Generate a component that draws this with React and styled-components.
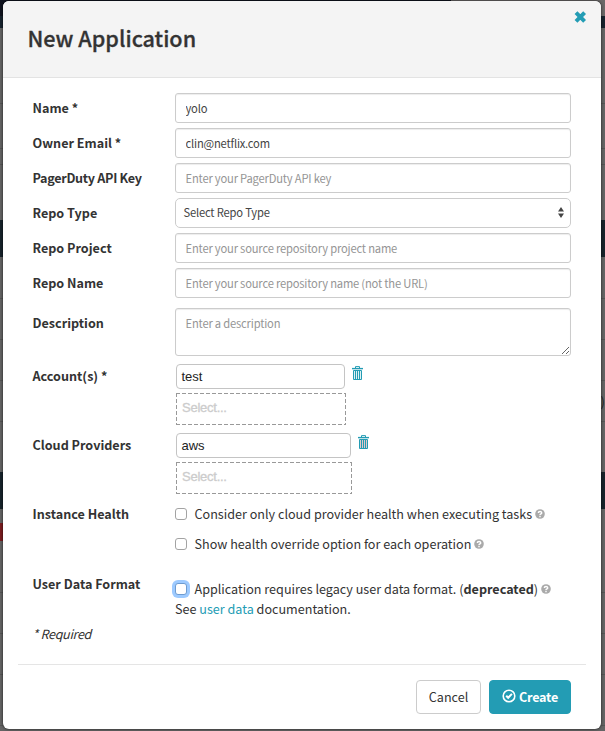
import React from "react";
import styled, { createGlobalStyle, css } from "styled-components";

const font = '"Noto Sans CJK SC", "Noto Sans", sans-serif';
const teal = "#239cb4";

const Global = createGlobalStyle`
  *, *::before, *::after { box-sizing: border-box; }
  html, body { margin: 0; padding: 0; }
  body { width: 605px; height: 731px; overflow: hidden; background: #626262; font-family: ${font}; color: #333; }
`;

const Page = styled.div`
  position: relative;
  width: 605px;
  height: 731px;
  overflow: hidden;
  padding: 1px 4px 0 3px;
  background: #5f5f5f;
`;

const Backdrop = styled.div`
  position: absolute;
  inset: 0;
  display: flex;
  flex-direction: column;
`;

const Strip = styled.div`
  flex: none;
  height: ${(p) => p.$h}px;
  background: ${(p) => p.$bg || "#646464"};
  border-top: ${(p) => (p.$line ? "1px solid #555" : "0")};
  display: flex;
  justify-content: ${(p) => (p.$end ? "flex-end" : "flex-start")};
  align-items: center;
  font-size: 13px;
  line-height: 1;
  color: #222;
  overflow: hidden;
`;

const RedTag = styled.div`
  width: 300px;
  height: 100%;
  background: #7b1c20;
`;

const TopBar = styled.div`
  position: absolute;
  left: 451px;
  top: 0;
  width: 154px;
  height: 16px;
  background: #6a6868;
`;

const Modal = styled.div`
  position: relative;
  height: 728px;
  background: #fff;
  border-radius: 6px;
  box-shadow: 0 0 3px rgba(0, 0, 0, 0.75);
  overflow: hidden;
  display: flex;
  flex-direction: column;
`;

const Header = styled.header`
  height: 77px;
  flex: none;
  background: #f4f4f4;
  border-bottom: 1px solid #e3e3e3;
  padding: 20px 14px 0 24.5px;
  display: flex;
  justify-content: space-between;
`;

const Title = styled.h3`
  margin: 0;
  font-size: 21.6px;
  line-height: 33px;
  font-weight: 500;
  -webkit-text-stroke: 0.3px #333;
  white-space: nowrap;
`;

const Close = styled.button`
  border: 0;
  padding: 0;
  background: none;
  width: 13px;
  height: 12px;
  margin-top: -10px;
  svg { display: block; }
`;

const Form = styled.form`
  margin: 0;
  height: 586px;
  flex: none;
  padding: 15px 30px 0 29.5px;
`;

const Row = styled.div`
  display: grid;
  grid-template-columns: 142.5px 1fr;
  height: ${(p) => p.$h}px;
`;

const Spacer = styled.div`
  height: ${(p) => p.$h}px;
`;

const Label = styled.label`
  font-size: 12.6px;
  font-weight: 700;
  line-height: 20px;
  padding-top: ${(p) => p.$pt ?? 5}px;
  letter-spacing: ${(p) => p.$track || 0}px;
  white-space: nowrap;
`;

const control = css`
  width: 396px;
  border: 1px solid #ccc;
  border-radius: 3px;
  background: #fff;
  box-shadow: inset 0 1px 1px rgba(0, 0, 0, 0.075);
  font-family: ${font};
  font-size: 11.2px;
  letter-spacing: -0.19px;
  color: #444;
  outline: none;
  &::placeholder { color: #959595; opacity: 1; }
`;

const Input = styled.input`
  ${control}
  height: 30px;
  padding: 0 9.5px 1px;
`;

const SelectBox = styled.div`
  ${control}
  height: 30px;
  border-radius: 5px;
  box-shadow: none;
  padding: 0 6px 1px 7.5px;
  display: flex;
  align-items: center;
  justify-content: space-between;
  line-height: 27px;
`;

const Textarea = styled.textarea`
  ${control}
  display: block;
  height: 48px;
  padding: 4.5px 9.5px;
  line-height: 18px;
  resize: vertical;
`;

const Stack = styled.div`
  display: flex;
  flex-direction: column;
  align-items: flex-start;
  padding-left: 1px;
`;

const Picked = styled.div`
  display: flex;
  gap: 7.4px;
  height: 25px;
  margin-bottom: 4px;
`;

const PickedValue = styled.div`
  width: ${(p) => p.$w}px;
  height: 25px;
  border: 1px solid #c4c4c4;
  border-radius: 4px;
  padding-left: 4.5px;
  font: 13px/23px "Liberation Sans", Arial, sans-serif;
  color: #222;
`;

const Trash = styled.button`
  border: 0;
  padding: 2px 0 0;
  background: none;
  width: 11px;
  height: 16px;
  svg { display: block; }
`;

const dashX = "repeating-linear-gradient(90deg, #999 0 4px, transparent 4px 6px)";
const dashY = "repeating-linear-gradient(180deg, #999 0 4px, transparent 4px 6px)";

const Dashed = styled.div`
  width: ${(p) => p.$w}px;
  height: 32px;
  padding-left: 6px;
  background:
    ${dashX} 0 0 / 100% 1px no-repeat,
    ${dashX} 0 100% / 100% 1px no-repeat,
    ${dashY} 0 0 / 1px 100% no-repeat,
    ${dashY} 100% 0 / 1px 100% no-repeat;
  font: 13px/30px "Liberation Sans", Arial, sans-serif;
  letter-spacing: -0.25px;
  color: #ccc;
  -webkit-text-stroke: 0.3px #ccc;
`;

const CheckLine = styled.div`
  display: flex;
  align-items: center;
  height: 20px;
  font-size: 12.6px;
  line-height: 20px;
  white-space: nowrap;
  margin-bottom: ${(p) => p.$mb || 0}px;
`;

const Box = styled.input`
  appearance: none;
  flex: none;
  margin: 0 7.5px 0 0;
  width: 12px;
  height: 12px;
  border: 1px solid ${(p) => (p.$focus ? "#6d9bd0" : "#a3a3a3")};
  border-radius: 3px;
  background: #fff;
  box-shadow: ${(p) => (p.$focus ? "0 0 0 3px #9dcaff" : "none")};
`;

const Help = styled.span`
  display: flex;
  flex: none;
  margin-left: 3px;
`;

const Link = styled.a`
  color: ${teal};
  text-decoration: none;
`;

const DocLine = styled.div`
  font-size: 12.6px;
  line-height: 20px;
`;

const Required = styled.em`
  display: block;
  font-size: 12.6px;
  line-height: 20px;
  letter-spacing: -0.35px;
`;

const Footer = styled.footer`
  margin: 0 15px;
  flex: 1;
  border-top: 1px solid #e5e5e5;
  padding: 15px 15px 0 0;
  display: flex;
  justify-content: flex-end;
  gap: 8px;
`;

const Button = styled.button`
  width: ${(p) => (p.$primary ? 82 : 65)}px;
  height: 34px;
  display: flex;
  align-items: center;
  justify-content: center;
  gap: 3px;
  padding: 0;
  border: 1px solid ${(p) => (p.$primary ? teal : "#ccc")};
  border-radius: 4px;
  background: ${(p) => (p.$primary ? teal : "#fff")};
  color: ${(p) => (p.$primary ? "#fff" : "#333")};
  font-family: ${font};
  font-size: 12.6px;
  font-weight: ${(p) => (p.$primary ? 700 : 400)};
  letter-spacing: ${(p) => (p.$primary ? -0.2 : 0)}px;
  line-height: 20px;
  svg { margin-top: -2px; }
`;

const TrashIcon = ({ fill }) => (
  <svg width="11" height="14" viewBox="0 0 11 14" fill="none" stroke={teal}>
    <path d="M1.5 4.5h8v9h-8z" fill={fill} />
    <path d="M3.5 2V.6h4V2M3.5 4v9M5.5 4v9M7.5 4v9" />
    <path d="M0 2.6h11" strokeWidth="1.4" />
  </svg>
);

const HelpIcon = () => (
  <Help>
    <svg width="10" height="10" viewBox="0 0 10 10">
      <circle cx="5" cy="5" r="4.8" fill="#aaa" />
      <path d="M3.3 4C3.4 2.1 6.7 2.1 6.7 3.9 6.7 5 5 4.9 5 6.1M5 6.8v1.4" fill="none" stroke="#fff" strokeWidth="1.4" />
    </svg>
  </Help>
);

const strips = [
  { h: 16, bg: "#10131f" },
  { h: 12, bg: "#17232e" },
  { h: 75 },
  { h: 45, line: 1 },
  { h: 16, line: 1 },
  { h: 56, line: 1 },
  { h: 37, bg: "#17232b" },
  { h: 41 },
  { h: 41, line: 1 },
  { h: 41, line: 1 },
  { h: 41, line: 1, right: ")" },
  { h: 51, line: 1 },
  { h: 37, bg: "#17232b" },
  { h: 14 },
  { h: 18, tag: true },
  { h: 51 },
  { h: 41, line: 1 },
  { h: 41, line: 1 },
  { h: 51, line: 1 },
  { h: 10, line: 1 },
];

const fields = [
  { label: "Name *", value: "yolo" },
  { label: "Owner Email *", value: "clin@netflix.com" },
  { label: "PagerDuty API Key", track: -0.3, placeholder: "Enter your PagerDuty API key" },
  { label: "Repo Type", select: true },
  { label: "Repo Project", placeholder: "Enter your source repository project name" },
  { label: "Repo Name", placeholder: "Enter your source repository name (not the URL)" },
];

const pickers = [
  { label: "Account(s) *", value: "test", w: 169, dw: 170, fill: "#dff1f3" },
  { label: "Cloud Providers", value: "aws", w: 175, dw: 176, fill: "#e3c9c9" },
];

export default function App() {
  return (
    <Page>
      <Global />
      <Backdrop aria-hidden="true">
        {strips.map((s, i) => (
          <Strip key={i} $h={s.h} $bg={s.bg} $line={s.line} $end={!!s.right}>
            {s.tag ? <RedTag /> : s.right}
          </Strip>
        ))}
        <TopBar />
      </Backdrop>
      <Modal>
        <Header>
          <Title>New Application</Title>
          <Close aria-label="Close">
            <svg width="13" height="12" viewBox="0 0 13 12">
              <path d="M2 1.7l8.6 8.6M10.6 1.7L2 10.3" stroke={teal} strokeWidth="4" />
            </svg>
          </Close>
        </Header>
        <Form>
          {fields.map((f) => (
            <Row key={f.label} $h={35}>
              <Label $track={f.track}>{f.label}</Label>
              {f.select ? (
                <SelectBox>
                  Select Repo Type
                  <svg width="6" height="11" viewBox="0 0 6 11" fill="#444">
                    <path d="M3 0l3 4.5H0zM3 11l3-4.5H0z" />
                  </svg>
                </SelectBox>
              ) : (
                <Input defaultValue={f.value} placeholder={f.placeholder} />
              )}
            </Row>
          ))}
          <Row $h={61}>
            <Label $pt={10}>Description</Label>
            <div>
              <Spacer $h={5} />
              <Textarea placeholder="Enter a description" />
            </div>
          </Row>
          {pickers.map((p) => (
            <Row key={p.label} $h={69}>
              <Label $pt={2}>{p.label}</Label>
              <Stack>
                <Picked>
                  <PickedValue $w={p.w}>{p.value}</PickedValue>
                  <Trash aria-label="Remove"><TrashIcon fill={p.fill} /></Trash>
                </Picked>
                <Dashed $w={p.dw}>Select...</Dashed>
              </Stack>
            </Row>
          ))}
          <Row $h={70}>
            <Label $pt={2}>Instance Health</Label>
            <div>
              <Spacer $h={2} />
              <CheckLine $mb={10}>
                <Box type="checkbox" />
                Consider only cloud provider health when executing tasks
                <HelpIcon />
              </CheckLine>
              <CheckLine>
                <Box type="checkbox" />
                Show health override option for each operation
                <HelpIcon />
              </CheckLine>
            </div>
          </Row>
          <Row $h={52}>
            <Label $pt={2}>User Data Format</Label>
            <div>
              <Spacer $h={7} />
              <CheckLine>
                <Box type="checkbox" $focus />
                <span>Application requires legacy user data format. (<b>deprecated</b>)</span>
                <HelpIcon />
              </CheckLine>
              <DocLine>See <Link>user data</Link> documentation.</DocLine>
            </div>
          </Row>
          <Required>* Required</Required>
        </Form>
        <Footer>
          <Button>Cancel</Button>
          <Button $primary>
            <svg width="14" height="14" viewBox="0 0 14 14" fill="none" stroke="#fff">
              <circle cx="7" cy="7" r="5.8" strokeWidth="1.6" />
              <path d="M4.2 6.8l2 2 3.7-3.9" strokeWidth="2" />
            </svg>
            Create
          </Button>
        </Footer>
      </Modal>
    </Page>
  );
}
